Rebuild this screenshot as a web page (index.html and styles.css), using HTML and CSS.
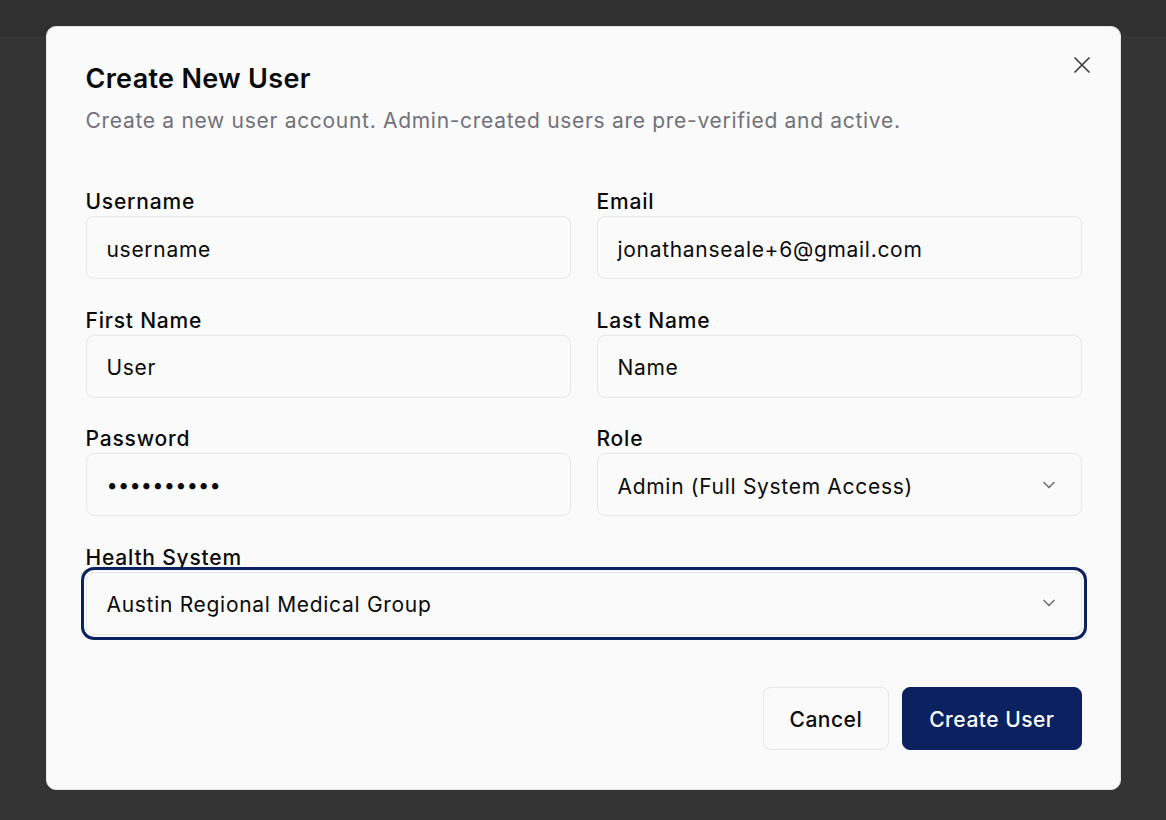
FILE: index.html
```html
<!DOCTYPE html>
<html lang="en">
<head>
<meta charset="utf-8">
<title>Create New User</title>
<link rel="stylesheet" href="styles.css">
</head>
<body>
<div class="topbar"></div>
<div class="overlay">
  <div class="dialog" role="dialog">
    <button class="close" aria-label="Close">
      <svg width="28" height="28" viewBox="0 0 24 24" fill="none" stroke="currentColor" stroke-width="1.5" stroke-linecap="round"><path d="M18 6 6 18M6 6l12 12"/></svg>
    </button>
    <h2 class="title">Create New User</h2>
    <p class="subtitle">Create a new user account. Admin-created users are pre-verified and active.</p>
    <form class="form">
      <div class="field">
        <label class="label">Username</label>
        <div class="input">username</div>
      </div>
      <div class="field">
        <label class="label">Email</label>
        <div class="input">jonathanseale+6@gmail.com</div>
      </div>
      <div class="field">
        <label class="label">First Name</label>
        <div class="input">User</div>
      </div>
      <div class="field">
        <label class="label">Last Name</label>
        <div class="input">Name</div>
      </div>
      <div class="field">
        <label class="label">Password</label>
        <div class="input password">••••••••••</div>
      </div>
      <div class="field">
        <label class="label">Role</label>
        <div class="input select">
          <span>Admin (Full System Access)</span>
          <svg class="chev" width="20" height="20" viewBox="0 0 24 24" fill="none" stroke="currentColor" stroke-width="2" stroke-linecap="round" stroke-linejoin="round"><path d="m6 9 6 6 6-6"/></svg>
        </div>
      </div>
      <div class="field full">
        <label class="label">Health System</label>
        <div class="input select focused">
          <span>Austin Regional Medical Group</span>
          <svg class="chev" width="20" height="20" viewBox="0 0 24 24" fill="none" stroke="currentColor" stroke-width="2" stroke-linecap="round" stroke-linejoin="round"><path d="m6 9 6 6 6-6"/></svg>
        </div>
      </div>
    </form>
    <div class="actions">
      <button class="btn btn-outline">Cancel</button>
      <button class="btn btn-primary">Create User</button>
    </div>
  </div>
</div>
</body>
</html>
```
FILE: styles.css
```css
* { box-sizing: border-box; }
html, body { margin: 0; padding: 0; }
body {
  background: #333333;
  font-family: Inter, "Noto Sans", sans-serif;
  color: #0a0a0a;
  height: 820px;
  overflow: hidden;
  position: relative;
}
.topbar {
  height: 38px;
  background: #303030;
  border-bottom: 1px solid #393939;
}
.overlay {
  position: absolute;
  inset: 0;
  display: flex;
  justify-content: center;
  padding-top: 26px;
}
.dialog {
  position: relative;
  width: 1075px;
  height: 764px;
  background: #fafafa;
  border: 1px solid #e5e5e5;
  border-radius: 10px;
  padding: 36px 38px 39px 39px;
  display: flex;
  flex-direction: column;
}
.close {
  position: absolute;
  top: 24px;
  right: 24px;
  width: 28px;
  height: 28px;
  padding: 0;
  border: none;
  background: none;
  color: #404040;
  display: flex;
  align-items: center;
  justify-content: center;
}
.title {
  margin: 0;
  font-size: 27px;
  line-height: 32px;
  font-weight: 600;
  letter-spacing: 0.3px;
}
.subtitle {
  margin: 12px 0 0;
  font-size: 21px;
  line-height: 28px;
  letter-spacing: 0.7px;
  color: #71717a;
}
.form {
  margin-top: 54px;
  display: grid;
  grid-template-columns: 1fr 1fr;
  column-gap: 26px;
  row-gap: 28.5px;
}
.field { display: flex; flex-direction: column; }
.field.full { grid-column: 1 / -1; }
.label {
  font-size: 21px;
  line-height: 24px;
  font-weight: 500;
  letter-spacing: 0.8px;
  padding-top: 1px;
  margin-bottom: 2px;
}
.input {
  height: 63px;
  border: 1px solid #e7e7e9;
  border-radius: 8px;
  background: #fafafa;
  padding: 3px 20px 0;
  display: flex;
  align-items: center;
  font-size: 21px;
  letter-spacing: 0.7px;
}
.password { letter-spacing: 0.2px; font-size: 20px; padding-top: 1px; }
.select { justify-content: space-between; }
.chev { color: #737373; margin-right: 2px; margin-top: -3px; }
.focused {
  box-shadow: 0 0 0 2px #fafafa, 0 0 0 5px #0b2160;
}
.actions {
  margin-top: auto;
  display: flex;
  justify-content: flex-end;
  gap: 13px;
}
.btn {
  height: 63px;
  border-radius: 8px;
  font-family: inherit;
  font-size: 21px;
  font-weight: 500;
  letter-spacing: 0.5px;
  padding: 2px 26px 0;
}
.btn-outline {
  background: #fafafa;
  border: 1px solid #e7e7e9;
  color: #0a0a0a;
}
.btn-primary {
  background: #0b2160;
  border: 1px solid #0b2160;
  color: #ffffff;
}
```
